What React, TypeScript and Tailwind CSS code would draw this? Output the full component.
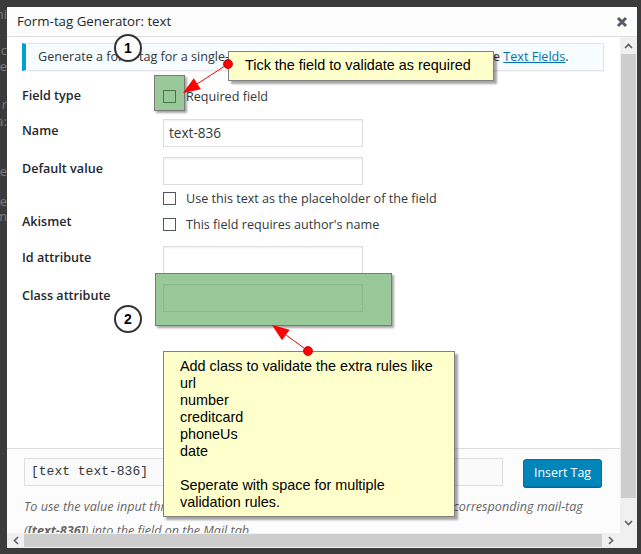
import React from 'react';

const Box = () => (
  <span className="block w-[13px] h-[13px] shrink-0 border border-[#50575e] bg-white" />
);

function Input({ value }: { value?: string }) {
  return (
    <div className="w-[200px] h-[28px] flex items-center border border-[#dddddd] bg-white px-[5px] text-[13.6px] text-[#32373c] shadow-[inset_0_1px_2px_rgba(0,0,0,0.07)]">
      {value}
    </div>
  );
}

function Row({ label, children, className = '', labelPad = 'pt-[2px]' }: { label: string; children: React.ReactNode; className?: string; labelPad?: string }) {
  return (
    <div className={`flex items-start ${className}`}>
      <div className={`w-[141px] shrink-0 leading-[19px] font-semibold text-[#23282d] ${labelPad}`}>{label}</div>
      <div>{children}</div>
    </div>
  );
}

function CheckLine({ text }: { text: string }) {
  return (
    <div className="flex items-center h-[13px] gap-[10px] text-[#32373c]">
      <Box />
      <span className="leading-[13px]">{text}</span>
    </div>
  );
}

function Chevron({ d }: { d: string }) {
  return (
    <svg width="9" height="6" viewBox="0 0 9 6">
      <polyline points={d} fill="none" stroke="#606060" strokeWidth="1.6" />
    </svg>
  );
}

function Backdrop() {
  // bits of the page that show at the left edge, behind the modal
  const bits: [string, string][] = [
    ['h-[7px]', ''],
    ['h-[12px]', 'hi'],
    ['h-[24px]', ''],
    ['h-[16px]', 'c'],
    ['h-[38px]', 'e'],
    ['h-[17px]', '( r'],
    ['h-[50px]', 'a:'],
    ['h-[30px]', 'e'],
    ['h-[15px]', 'e'],
    ['h-[15px]', 'm'],
  ];
  return (
    <div className="w-[7px] h-full overflow-hidden flex flex-col text-[13px] text-[#7d7d7d] leading-[15px]">
      {bits.map(([h, t], i) => (
        <div key={i} className={`${h} shrink-0 flex justify-end whitespace-nowrap`}>{t}</div>
      ))}
    </div>
  );
}

export default function App() {
  return (
    <div className="relative w-[641px] h-[554px] overflow-hidden bg-[#3b3b3b] flex font-['Open_Sans','Noto_Sans',sans-serif] text-[12.6px]">
      <Backdrop />
      <div className="w-[630px] flex flex-col shrink-0">
        <div className="h-[7px] shrink-0" />
        <div className="h-[541px] bg-white flex flex-col shrink-0">
          {/* header */}
          <div className="h-[30px] shrink-0 border-b border-[#dddddd] bg-[#fcfcfc] flex items-center justify-between pl-[10px] pr-[9px]">
            <span className="text-[13.3px] text-[#23282d]">Form-tag Generator: text</span>
            <svg width="12" height="12" viewBox="0 0 12 12">
              <path d="M2 2 L10 10 M10 2 L2 10" stroke="#555d66" strokeWidth="3" />
            </svg>
          </div>

          <div className="flex h-[496px] shrink-0">
            {/* content */}
            <div className="w-[613px] flex flex-col overflow-hidden">
              <div className="h-[411px] shrink-0 pl-[15px] pr-[16px] pt-[6px]">
                <div className="h-[28px] flex items-center border border-[#e5e5e5] border-l-4 border-l-[#00a0d2] bg-[#f7fcfe] pl-[12px] text-[#32373c] shadow-[0_1px_1px_rgba(0,0,0,0.04)]">
                  <span className="whitespace-nowrap">
                    Generate a form-tag for a single-line plain text input field. For more details, see{' '}
                    <span className="text-[#0073aa] underline">Text Fields</span>.
                  </span>
                </div>

                <Row label="Field type" className="mt-[15px]" labelPad="pt-0">
                  <div className="pt-[4px]">
                    <CheckLine text="Required field" />
                  </div>
                </Row>
                <Row label="Name" className="mt-[14px]">
                  <Input value="text-836" />
                </Row>
                <Row label="Default value" className="mt-[10px]">
                  <Input />
                  <div className="mt-[7px]">
                    <CheckLine text="Use this text as the placeholder of the field" />
                  </div>
                </Row>
                <Row label="Akismet" className="mt-[7px]" labelPad="pt-0">
                  <div className="pt-[6px]">
                    <CheckLine text="This field requires author's name" />
                  </div>
                </Row>
                <Row label="Id attribute" className="mt-[15px]">
                  <Input />
                </Row>
                <Row label="Class attribute" className="mt-[10px]">
                  <Input />
                </Row>
              </div>

              {/* footer */}
              <div className="flex-1 border-t border-[#dddddd] bg-[#fcfcfc] pl-[17px] pt-[9px] overflow-hidden">
                <div className="flex items-start">
                  <div className="w-[479px] h-[28px] border border-[#dddddd] bg-[#fafafa] flex items-center pl-[6px] font-['Liberation_Mono','DejaVu_Sans_Mono',monospace] text-[13px] text-[#32373c]">
                    [text text-836]
                  </div>
                  <div className="ml-[20px] mt-[1px] w-[79px] h-[28px] rounded-[3px] bg-[#0085ba] border border-[#0073aa] shadow-[0_1px_0_#006799] flex items-center justify-center text-white text-[12.4px]">
                    Insert Tag
                  </div>
                </div>
                <p className="mt-[8px] italic text-[#666666] leading-[24px] whitespace-nowrap">
                  To use the value input through this field in a mail field, you need to insert the corresponding mail-tag
                  <br />
                  (<b>[text-836]</b>) into the field on the Mail tab.
                </p>
              </div>
            </div>

            {/* vertical scrollbar */}
            <div className="w-[17px] bg-[#f0f0f0] flex flex-col">
              <div className="h-[17px] flex items-center justify-center">
                <Chevron d="1,5 4.5,1.5 8,5" />
              </div>
              <div className="h-[444px] mx-[1px] bg-[#cdcdcd]" />
              <div className="flex-1 flex items-end justify-center pb-[7px]">
                <Chevron d="1,1 4.5,4.5 8,1" />
              </div>
            </div>
          </div>

          {/* horizontal scrollbar */}
          <div className="h-[15px] bg-[#f0f0f0] flex">
            <div className="w-[17px] flex items-center justify-center">
              <svg width="6" height="9" viewBox="0 0 6 9">
                <polyline points="5,1 1.5,4.5 5,8" fill="none" stroke="#606060" strokeWidth="1.6" />
              </svg>
            </div>
            <div className="w-[578px] my-[1px] bg-[#cdcdcd]" />
            <div className="w-[18px] flex items-center justify-center">
              <svg width="6" height="9" viewBox="0 0 6 9">
                <polyline points="1,1 4.5,4.5 1,8" fill="none" stroke="#606060" strokeWidth="1.6" />
              </svg>
            </div>
            <div className="flex-1 bg-[#f0f0f0]" />
          </div>
        </div>
      </div>

      {/* annotation layer */}
      <div className="absolute left-[154px] top-[75px] w-[31px] h-[36px] border border-[#7a7a7a] bg-[rgba(60,150,60,0.52)] shadow-[2px_2px_2px_rgba(0,0,0,0.35)]" />
      <div className="absolute left-[155px] top-[273px] w-[237px] h-[53px] border border-[#7a7a7a] bg-[rgba(60,150,60,0.52)] shadow-[2px_2px_2px_rgba(0,0,0,0.35)]" />

      <div className="absolute left-[114px] top-[34px] w-[28px] h-[28px] rounded-full border-2 border-[#333333] bg-white flex items-center justify-center font-['Liberation_Sans',Arial,sans-serif] font-bold text-[14px] text-black">
        1
      </div>
      <div className="absolute left-[114px] top-[305px] w-[28px] h-[28px] rounded-full border-2 border-[#333333] bg-white flex items-center justify-center font-['Liberation_Sans',Arial,sans-serif] font-bold text-[14px] text-black">
        2
      </div>

      <div className="absolute left-[228px] top-[51px] w-[266px] h-[30px] border border-[#808080] bg-[#ffffcc] shadow-[3px_3px_2px_rgba(0,0,0,0.35)] pl-[16px] flex items-center font-['Liberation_Sans',Arial,sans-serif] text-[14.4px] text-black">
        Tick the field to validate as required
      </div>
      <div className="absolute left-[163px] top-[351px] w-[292px] h-[166px] border border-[#808080] bg-[#ffffcc] shadow-[3px_3px_2px_rgba(0,0,0,0.35)] pl-[16px] pt-[6px] font-['Liberation_Sans',Arial,sans-serif] text-[14.4px] leading-[17px] text-black">
        <div>Add class to validate the extra rules like</div>
        <div>url</div>
        <div>number</div>
        <div>creditcard</div>
        <div>phoneUs</div>
        <div>date</div>
        <div className="h-[17px]" />
        <div>Seperate with space for multiple</div>
        <div>validation rules.</div>
      </div>

      <svg className="absolute left-0 top-0 pointer-events-none" width="641" height="554" viewBox="0 0 641 554">
        <line x1="228" y1="64" x2="197" y2="84" stroke="#ff0000" strokeWidth="1" />
        <polygon points="183,93 200.8,89.3 193.8,78.3" fill="#ff0000" />
        <circle cx="228" cy="64" r="4.5" fill="#ff0000" stroke="#b00000" strokeWidth="0.8" />
        <line x1="308" y1="351" x2="286" y2="335" stroke="#ff0000" strokeWidth="1" />
        <polygon points="272,325 289.6,329.7 282,340.3" fill="#ff0000" />
        <circle cx="308" cy="351" r="4.5" fill="#ff0000" stroke="#b00000" strokeWidth="0.8" />
      </svg>
    </div>
  );
}
